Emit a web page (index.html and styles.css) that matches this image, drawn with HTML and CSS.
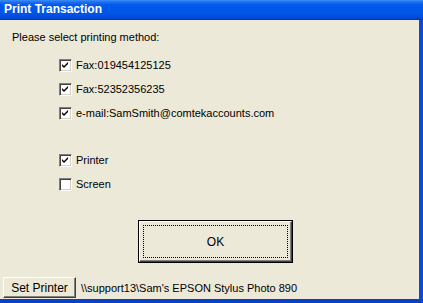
FILE: index.html
```html
<!DOCTYPE html>
<html lang="en">
<head>
  <meta charset="UTF-8" />
  <title>Print Transaction</title>
  <link rel="stylesheet" href="styles.css">
</head>
<body>
  <div class="window">
    <div class="titlebar">Print Transaction</div>
    <div class="client">
      <div class="prompt">Please select printing method:</div>

      <div class="options">
        <label class="option"><span class="check"><svg viewBox="0 0 7 7" width="7" height="7"><path d="M0 2 L2 4 L6 0 L6 2 L2 6 L0 4 Z" fill="#000"/></svg></span>Fax:019454125125</label>
        <label class="option"><span class="check"><svg viewBox="0 0 7 7" width="7" height="7"><path d="M0 2 L2 4 L6 0 L6 2 L2 6 L0 4 Z" fill="#000"/></svg></span>Fax:52352356235</label>
        <label class="option"><span class="check"><svg viewBox="0 0 7 7" width="7" height="7"><path d="M0 2 L2 4 L6 0 L6 2 L2 6 L0 4 Z" fill="#000"/></svg></span>e-mail:SamSmith@comtekaccounts.com</label>
      </div>

      <div class="options group2">
        <label class="option"><span class="check"><svg viewBox="0 0 7 7" width="7" height="7"><path d="M0 2 L2 4 L6 0 L6 2 L2 6 L0 4 Z" fill="#000"/></svg></span>Printer</label>
        <label class="option"><span class="check"></span>Screen</label>
      </div>

      <button class="btn ok"><span class="focus">OK</span></button>

      <div class="footer">
        <button class="btn small">Set Printer</button>
        <span class="path">\\support13\Sam's EPSON Stylus Photo 890</span>
      </div>
    </div>
  </div>
</body>
</html>
```

FILE: styles.css
```css
body {
  margin: 0;
  padding: 0;
  font-family: 'Liberation Sans', Arial, sans-serif;
  background: #ece9d8;
}

.window {
  width: 423px;
  height: 303px;
  display: flex;
  flex-direction: column;
}

.titlebar {
  height: 20px;
  line-height: 19px;
  padding-left: 4px;
  color: #fff;
  font-family: 'Liberation Sans', Arial, sans-serif;
  font-weight: bold;
  font-size: 12px;
  background: linear-gradient(to bottom, #3d8ef5 0px, #1f6ff0 2px, #0058ee 5px, #0055e5 14px, #0048d8 18px, #0037b0 20px);
}

.client {
  flex: 1;
  display: flex;
  flex-direction: column;
  background: #ece9d8;
  border-right: 4px solid #0a4ad8;
  border-bottom: 4px solid #0a40c8;
  font-size: 11px;
  color: #000;
}

.prompt {
  margin-top: 10px;
  padding-left: 12px;
  line-height: 14px;
}

.options {
  margin-top: 9px;
  padding-left: 59px;
}

.group2 {
  margin-top: 23px;
}

.option {
  display: flex;
  align-items: center;
  height: 24px;
}

.check {
  width: 9px;
  height: 9px;
  margin-right: 4px;
  display: flex;
  align-items: center;
  justify-content: center;
  background: #fff;
  border: 1px solid;
  border-color: #808080 #fff #fff #808080;
  box-shadow: inset 1px 1px 0 #404040, inset -1px -1px 0 #d4d0c8;
  padding: 1px;
}

.btn {
  font-family: 'Liberation Sans', Arial, sans-serif;
  font-size: 11px;
  color: #000;
  background: #ece9d8;
  border: 1px solid;
  border-color: #fff #404040 #404040 #fff;
  box-shadow: inset -1px -1px 0 #808080;
  padding: 0;
  cursor: pointer;
}

.ok {
  width: 153px;
  height: 41px;
  margin-top: 25px;
  margin-left: 139px;
  outline: 1px solid #000;
  outline-offset: 0;
  display: flex;
  padding: 3px;
  font-size: 12px;
}

.focus {
  flex: 1;
  border: 1px dotted #000;
  display: flex;
  align-items: center;
  justify-content: center;
}

.footer {
  margin-top: auto;
  display: flex;
  align-items: center;
  padding-left: 3px;
  padding-bottom: 1px;
}

.small {
  width: 73px;
  height: 21px;
  font-size: 12px;
}

.path {
  margin-left: 5px;
  font-size: 11px;
}
```
